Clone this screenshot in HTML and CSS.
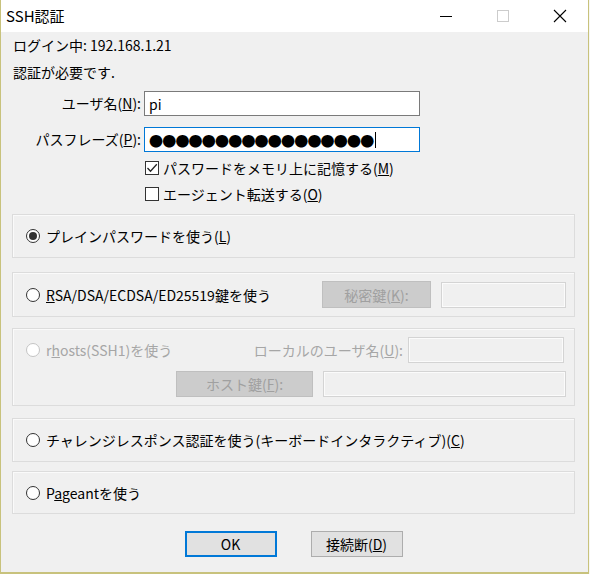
FILE: index.html
```html
<!DOCTYPE html>
<html>
<head>
  <meta charset="utf-8">
  <link rel="stylesheet" href="styles.css">
</head>
<body>
  <div class="window">
    <div class="titlebar">
      <span class="title">SSH認証</span>
      <div class="win-controls">
        <span class="wc">
          <svg width="14" height="14" viewBox="0 0 14 14"><line x1="1" y1="7.5" x2="13" y2="7.5" stroke="#000" stroke-width="1"/></svg>
        </span>
        <span class="wc">
          <svg width="14" height="14" viewBox="0 0 14 14"><rect x="1.5" y="1.5" width="11" height="11" fill="none" stroke="#cccccc" stroke-width="1"/></svg>
        </span>
        <span class="wc">
          <svg width="14" height="14" viewBox="0 0 14 14"><path d="M1 1 L13 13 M13 1 L1 13" stroke="#000" stroke-width="1.1"/></svg>
        </span>
      </div>
    </div>

    <div class="content">
      <div class="info">ログイン中: 192.168.1.21</div>
      <div class="info">認証が必要です.</div>

      <div class="form">
        <label class="form-label">ユーザ名(<u>N</u>):</label>
        <div class="field">pi</div>
        <label class="form-label">パスフレーズ(<u>P</u>):</label>
        <div class="field field-focus"><span class="dots">●●●●●●●●●●●●●●●●●</span><span class="caret"></span></div>
      </div>

      <div class="checks">
        <div class="check">
          <span class="box">
            <svg width="12" height="12" viewBox="0 0 12 12"><path d="M1.5 6 L4.5 9.2 L10.8 2.2" fill="none" stroke="#222" stroke-width="1.3"/></svg>
          </span>
          <span>パスワードをメモリ上に記憶する(<u>M</u>)</span>
        </div>
        <div class="check">
          <span class="box"></span>
          <span>エージェント転送する(<u>O</u>)</span>
        </div>
      </div>

      <div class="group group-plain">
        <div class="radio-row">
          <span class="radio radio-on"></span>
          <span>プレインパスワードを使う(<u>L</u>)</span>
        </div>
      </div>

      <div class="group group-key">
        <div class="radio-row">
          <span class="radio"></span>
          <span><u>R</u>SA/DSA/ECDSA/ED25519鍵を使う</span>
        </div>
        <button class="btn btn-disabled btn-key">秘密鍵(<u>K</u>):</button>
        <div class="field field-disabled field-key"></div>
      </div>

      <div class="group group-rhosts">
        <div class="rhosts-row">
          <div class="radio-row disabled">
            <span class="radio radio-disabled"></span>
            <span>r<u>h</u>osts(SSH1)を使う</span>
          </div>
          <span class="disabled-label">ローカルのユーザ名(<u>U</u>):</span>
          <div class="field field-disabled field-local"></div>
        </div>
        <div class="rhosts-row rhosts-row-2">
          <button class="btn btn-disabled btn-host">ホスト鍵(<u>F</u>):</button>
          <div class="field field-disabled field-host"></div>
        </div>
      </div>

      <div class="group group-challenge">
        <div class="radio-row">
          <span class="radio"></span>
          <span>チャレンジレスポンス認証を使う(キーボードインタラクティブ)(<u>C</u>)</span>
        </div>
      </div>

      <div class="group group-pageant">
        <div class="radio-row">
          <span class="radio"></span>
          <span>P<u>a</u>geantを使う</span>
        </div>
      </div>

      <div class="buttons">
        <button class="btn btn-default">OK</button>
        <button class="btn">接続断(<u>D</u>)</button>
      </div>
    </div>
  </div>
</body>
</html>
```

FILE: styles.css
```css
body {
  margin: 0;
  background: #f7f7f2;
  font-family: "Noto Sans CJK JP", "Noto Sans", sans-serif;
  font-size: 14px;
  color: #000;
}

.window {
  width: 589px;
  height: 574px;
  box-sizing: border-box;
  border-left: 1px solid #c8c27c;
  border-right: 1px solid #c8c27c;
  border-bottom: 2px solid #c8c27c;
  display: flex;
  flex-direction: column;
  background: #f0f0f0;
}

/* title bar */
.titlebar {
  height: 32px;
  background: #fff;
  display: flex;
  align-items: center;
  justify-content: space-between;
  flex-shrink: 0;
}

.title {
  font-size: 15px;
  padding-left: 5px;
  line-height: 32px;
}

.win-controls {
  display: flex;
  height: 32px;
}

.wc {
  width: 57px;
  display: flex;
  align-items: center;
  justify-content: center;
}

.wc svg {
  display: block;
}

/* body */
.content {
  flex: 1;
  padding: 0 13px 0 11px;
}

.info {
  line-height: 27px;
  padding-left: 1px;
}

.form {
  display: grid;
  grid-template-columns: 129px 276px;
  column-gap: 3px;
  row-gap: 11px;
  margin-top: 5px;
}

.form-label {
  text-align: right;
  line-height: 25px;
}

.field {
  height: 25px;
  box-sizing: border-box;
  border: 1px solid #7a7a7a;
  background: #fff;
  padding: 0 4px;
  line-height: 22px;
  display: flex;
  align-items: center;
}

.field-focus {
  border-color: #0078d7;
}

.dots {
  font-size: 14px;
  letter-spacing: -0.8px;
  line-height: 22px;
}

.caret {
  display: inline-block;
  width: 1px;
  height: 16px;
  background: #000;
  margin-left: 2px;
}

.checks {
  margin-top: 3px;
  padding-left: 133px;
}

.check {
  height: 26px;
  display: flex;
  align-items: center;
  gap: 4px;
}

.box {
  width: 14px;
  height: 14px;
  box-sizing: border-box;
  border: 1px solid #333;
  background: #fff;
  display: flex;
  align-items: center;
  justify-content: center;
}

/* group boxes */
.group {
  border: 1px solid #dcdcdc;
  box-shadow: inset 1px 1px 0 #fafafa;
  box-sizing: border-box;
  padding: 0 8px 0 13px;
  display: flex;
  align-items: center;
}

.group-plain {
  margin-top: 7px;
  height: 44px;
}

.group-key {
  margin-top: 14px;
  height: 45px;
}

.group-rhosts {
  margin-top: 11px;
  height: 78px;
  flex-direction: column;
  align-items: stretch;
  justify-content: flex-start;
  padding-top: 8px;
  gap: 8px;
}

.group-challenge {
  margin-top: 12px;
  height: 44px;
}

.group-pageant {
  margin-top: 9px;
  height: 43px;
}

.radio-row {
  display: flex;
  align-items: center;
  gap: 6px;
  flex: 1;
}

.radio {
  width: 14px;
  height: 14px;
  box-sizing: border-box;
  border: 1px solid #333;
  border-radius: 50%;
  background: #fff;
  display: flex;
  align-items: center;
  justify-content: center;
}

.radio-on::after {
  content: "";
  width: 8px;
  height: 8px;
  border-radius: 50%;
  background: #333;
}

.radio-disabled {
  border-color: #c4c4c4;
}

.disabled,
.disabled-label {
  color: #a6a6a6;
}

.rhosts-row {
  display: flex;
  align-items: center;
  height: 26px;
}

.rhosts-row-2 {
  padding-left: 150px;
  gap: 10px;
}

.disabled-label {
  margin-right: 5px;
}

.field-disabled {
  background: #f0f0f0;
  border-color: #d4d4d4;
  box-shadow: inset 1px 1px 0 #fbfbfb, inset -1px -1px 0 #fbfbfb;
}

.field-key {
  width: 125px;
  height: 26px;
  margin-left: 10px;
}

.field-local {
  width: 156px;
  height: 26px;
  margin-right: 2px;
}

.field-host {
  width: 243px;
  height: 26px;
}

/* buttons */
.btn {
  font-family: inherit;
  font-size: 14px;
  height: 26px;
  width: 92px;
  box-sizing: border-box;
  border: 1px solid #adadad;
  background: #e1e1e1;
  color: #000;
  padding: 0;
  line-height: 22px;
}

.btn-default {
  border: 2px solid #0078d7;
}

.btn-disabled {
  background: #cccccc;
  border-color: #bfbfbf;
  color: #a0a0a0;
}

.btn-key {
  width: 109px;
  height: 27px;
}

.btn-host {
  width: 137px;
}

.buttons {
  display: flex;
  justify-content: center;
  gap: 34px;
  margin-top: 17px;
}
```
